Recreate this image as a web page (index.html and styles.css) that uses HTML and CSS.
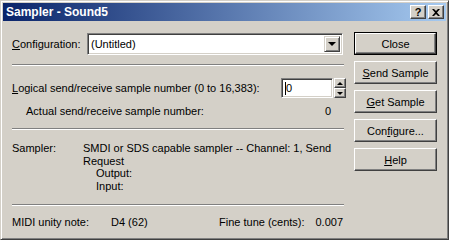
FILE: index.html
```html
<!DOCTYPE html>
<html lang="en">

<head>
    <meta charset="UTF-8">
    <meta name="viewport" content="width=device-width, initial-scale=1.0">
    <title>Sampler - Sound5</title>
    <link rel="stylesheet" href="styles.css">
</head>

<body>
    <div class="window">
        <div class="titlebar">
            <span class="caption">Sampler - Sound5</span>
            <div class="caption-btns">
                <span class="cap-btn help-btn">?</span>
                <span class="cap-btn close-btn">
                    <svg width="8" height="7" viewBox="0 0 8 7">
                        <path d="M0 0h2l2 2 2-2h2L5 3.5 8 7H6L4 5 2 7H0l3-3.5z" fill="#000" />
                    </svg>
                </span>
            </div>
        </div>

        <div class="content">
            <div class="left">
                <div class="row config-row">
                    <label class="config-label"><u>C</u>onfiguration:</label>
                    <div class="combo">
                        <span class="combo-text">(Untitled)</span>
                        <span class="combo-btn"><i class="tri down"></i></span>
                    </div>
                </div>

                <div class="sep first"></div>

                <div class="row logical-row">
                    <label class="grow"><u>L</u>ogical send/receive sample number (0 to 16,383):</label>
                    <div class="spin-edit"><span class="caret"></span>0</div>
                    <div class="spin-btns">
                        <span class="spin-btn"><i class="tri up"></i></span>
                        <span class="spin-btn"><i class="tri down"></i></span>
                    </div>
                </div>

                <div class="row actual-row">
                    <span class="grow">Actual send/receive sample number:</span>
                    <span class="actual-value">0</span>
                </div>

                <div class="sep second"></div>

                <div class="sampler">
                    <span class="sampler-label">Sampler:</span>
                    <div class="sampler-info">
                        <div>SMDI or SDS capable sampler -- Channel: 1, Send</div>
                        <div>Request</div>
                        <div class="sub">Output:</div>
                        <div class="sub">Input:</div>
                    </div>
                </div>

                <div class="sep third"></div>

                <div class="row midi-row">
                    <span class="midi-label">MIDI unity note:</span>
                    <span class="midi-note">D4 (62)</span>
                    <span class="fine-label">Fine tune (cents):</span>
                    <span class="fine-value">0.007</span>
                </div>
            </div>

            <div class="right">
                <div class="default-ring"><button class="btn">Close</button></div>
                <button class="btn"><u>S</u>end Sample</button>
                <button class="btn"><u>G</u>et Sample</button>
                <button class="btn">Con<u>f</u>igure...</button>
                <button class="btn"><u>H</u>elp</button>
            </div>
        </div>
    </div>
</body>

</html>
```

FILE: styles.css
```css
*,
html {
    padding: 0;
    margin: 0;
    box-sizing: border-box;
}

body {
    background: #d4d0c8;
    font-family: "Liberation Sans", Arial, sans-serif;
    font-size: 11px;
    color: #000;
}

u {
    text-decoration: underline;
    text-underline-offset: 1px;
}

.window {
    width: 449px;
    height: 240px;
    background: #d4d0c8;
    border: 1px solid;
    border-color: #d4d0c8 #404040 #404040 #d4d0c8;
    box-shadow: inset 1px 1px #fff, inset -1px -1px #808080;
    padding: 2px;
}

.titlebar {
    height: 18px;
    display: flex;
    align-items: center;
    justify-content: space-between;
    background: linear-gradient(to right, #0a246a, #a6caf0);
    padding: 0 2px 0 3px;
}

.caption {
    color: #fff;
    font-weight: bold;
    font-size: 12px;
}

.caption-btns {
    display: flex;
    gap: 2px;
}

.cap-btn {
    width: 16px;
    height: 14px;
    display: flex;
    align-items: center;
    justify-content: center;
    background: #d4d0c8;
    border: 1px solid;
    border-color: #fff #404040 #404040 #fff;
    box-shadow: inset -1px -1px #808080;
    font-weight: bold;
    font-size: 11px;
    line-height: 1;
}

.content {
    display: flex;
    padding: 11px 0 0 9px;
}

.left {
    width: 334px;
}

.row {
    display: flex;
    align-items: center;
}

.grow {
    flex: 1;
}

.config-row {
    height: 22px;
    margin-top: 1px;
}

.config-label {
    width: 75px;
}

.combo {
    width: 256px;
    height: 22px;
    display: flex;
    align-items: center;
    justify-content: space-between;
    background: #fff;
    border: 1px solid;
    border-color: #808080 #fff #fff #808080;
    box-shadow: inset 1px 1px #404040, inset -1px -1px #d4d0c8;
    padding: 2px;
}

.combo-text {
    padding-left: 1px;
}

.combo-btn {
    width: 16px;
    height: 16px;
    display: flex;
    align-items: center;
    justify-content: center;
    background: #d4d0c8;
    border: 1px solid;
    border-color: #d4d0c8 #404040 #404040 #d4d0c8;
    box-shadow: inset 1px 1px #fff, inset -1px -1px #808080;
}

.tri {
    display: block;
    width: 0;
    height: 0;
    border-left: 4px solid transparent;
    border-right: 4px solid transparent;
}

.tri.down {
    border-top: 4px solid #000;
}

.tri.up {
    border-bottom: 4px solid #000;
}

.spin-btn .tri {
    border-left-width: 3px;
    border-right-width: 3px;
}

.spin-btn .tri.down {
    border-top-width: 3px;
}

.spin-btn .tri.up {
    border-bottom-width: 3px;
}

.sep {
    width: 332px;
    border-top: 1px solid #808080;
    border-bottom: 1px solid #fff;
}

.sep.first {
    margin-top: 9px;
}

.logical-row {
    height: 20px;
    margin-top: 12px;
}

.spin-edit {
    width: 52px;
    height: 20px;
    display: flex;
    align-items: center;
    background: #fff;
    border: 1px solid;
    border-color: #808080 #fff #fff #808080;
    box-shadow: inset 1px 1px #404040, inset -1px -1px #d4d0c8;
    padding-left: 3px;
}

.caret {
    width: 1px;
    height: 13px;
    background: #000;
}

.spin-btns {
    width: 12px;
    height: 20px;
    margin-left: 1px;
    display: flex;
    flex-direction: column;
}

.spin-btn {
    flex: 1;
    display: flex;
    align-items: center;
    justify-content: center;
    background: #d4d0c8;
    border: 1px solid;
    border-color: #fff #404040 #404040 #fff;
    box-shadow: inset -1px -1px #808080;
}

.actual-row {
    height: 13px;
    margin-top: 6px;
    padding-left: 14px;
}

.actual-value {
    padding-right: 15px;
}

.sep.second {
    margin-top: 11px;
}

.sampler {
    display: flex;
    margin-top: 12px;
    line-height: 12.5px;
    white-space: nowrap;
}

.sampler-label {
    width: 71px;
}

.sampler-info .sub {
    padding-left: 13px;
}

.sep.third {
    margin-top: 12px;
}

.midi-row {
    height: 13px;
    margin-top: 9px;
}

.midi-label {
    width: 99px;
}

.midi-note {
    width: 108px;
}

.fine-label {
    flex: 1;
}

.fine-value {
    padding-right: 3px;
}

.right {
    margin-left: 8px;
    display: flex;
    flex-direction: column;
    gap: 6px;
}

.btn {
    width: 83px;
    height: 23px;
    font-family: inherit;
    font-size: 11px;
    color: #000;
    background: #d4d0c8;
    border: 1px solid;
    border-color: #fff #404040 #404040 #fff;
    box-shadow: inset -1px -1px #808080;
}

.default-ring {
    width: 83px;
    height: 23px;
    border: 1px solid #000;
}

.default-ring .btn {
    width: 81px;
    height: 21px;
}
```
